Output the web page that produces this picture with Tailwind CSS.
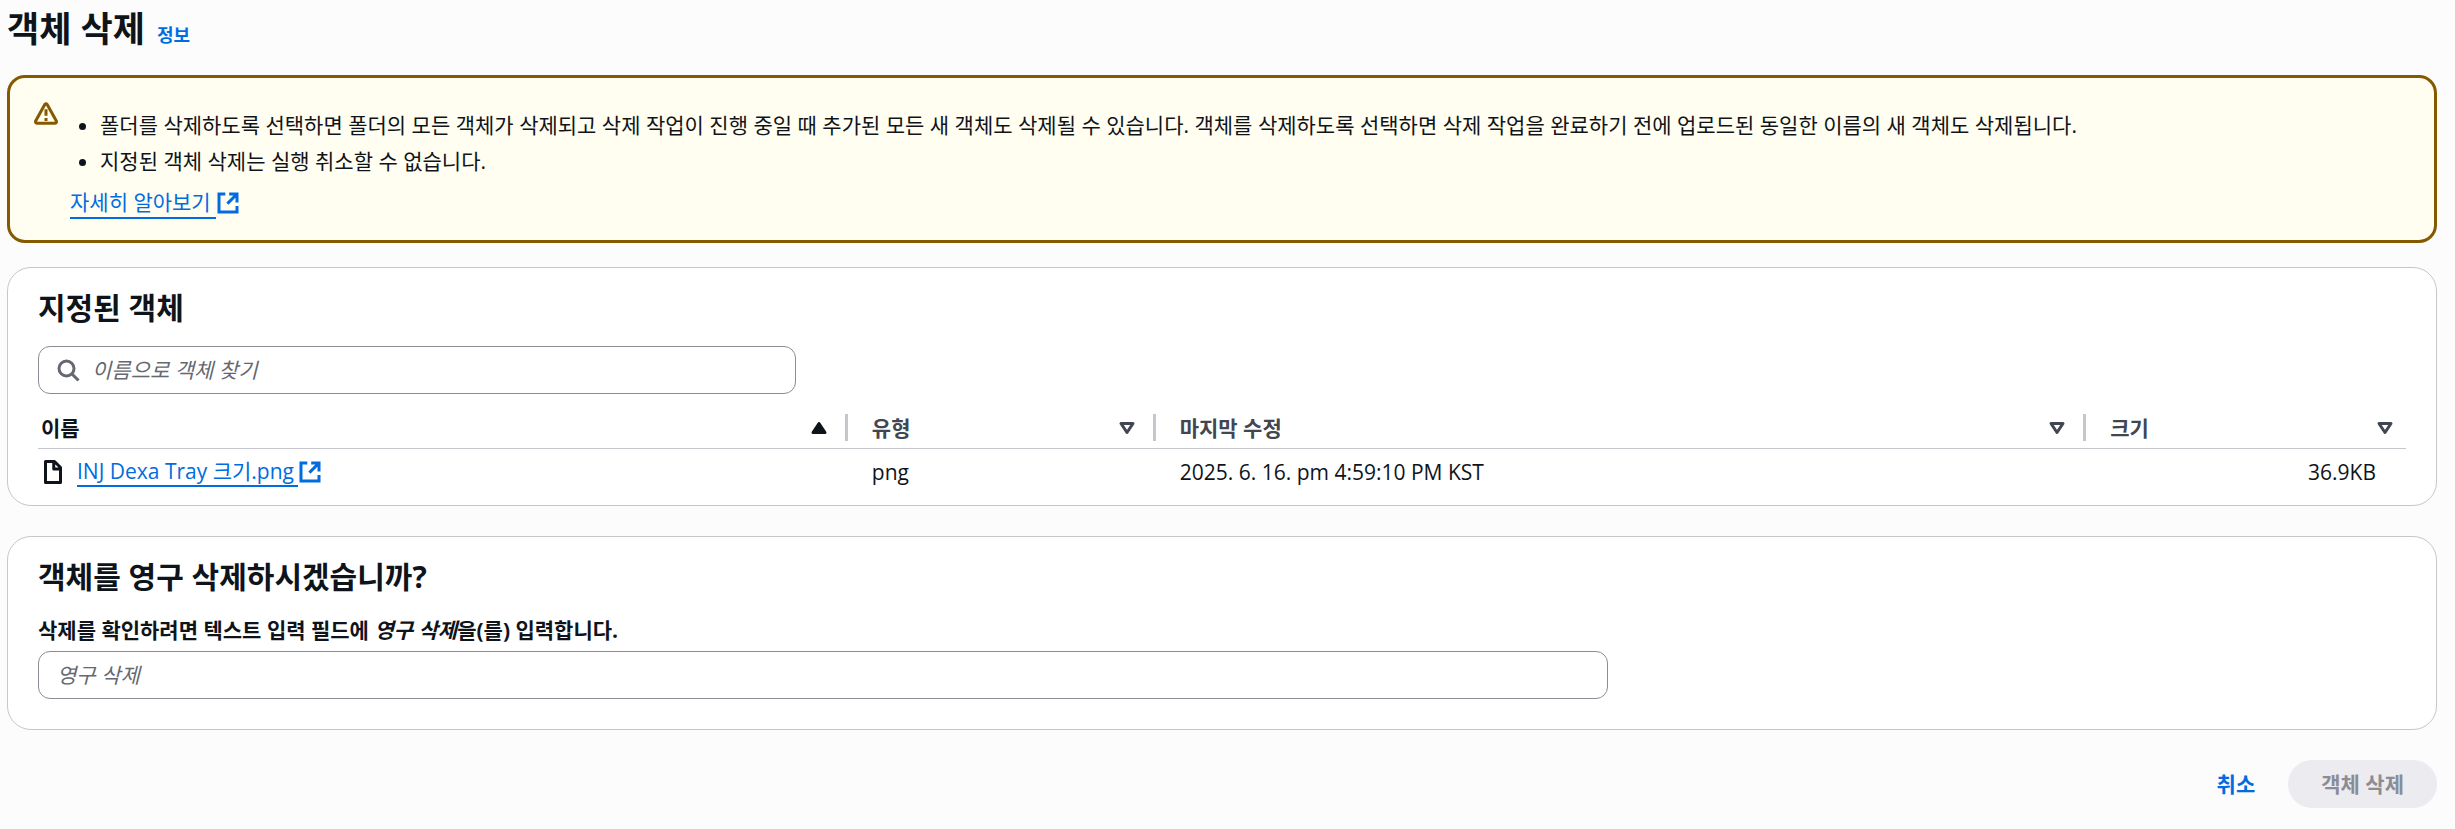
<!DOCTYPE html>
<html lang="ko">
<head>
    <meta charset="UTF-8">
    <meta name="viewport" content="width=device-width, initial-scale=1.0">
    <title>객체 삭제</title>
    <script src="https://cdn.jsdelivr.net/npm/@tailwindcss/browser@4"></script>
</head>
<body class="bg-[#fcfcfd] text-[#0f141a] text-[21px] leading-[30px] font-['Open_Sans','Noto_Sans_CJK_KR',sans-serif]">
    <!-- Shared icons -->
    <svg class="hidden">
        <symbol id="external" viewBox="0 0 16 16" fill="none" stroke="currentColor" stroke-width="2">
            <path d="M8.8 2H14v5.6M7.6 8.4L14 2M14 10v4H2V2h4.2" />
        </symbol>
        <symbol id="sort" viewBox="0 0 16 16" fill="none" stroke="currentColor" stroke-width="2" stroke-linejoin="round">
            <path d="M4 5h8l-4 6z" />
        </symbol>
    </svg>

    <main class="pl-[7px] pr-[18px] pb-5">
        <header class="flex items-baseline gap-3 pt-[6px] pb-6">
            <h1 class="text-[35px] leading-[45px] font-bold">객체 삭제</h1>
            <a href="#" class="text-[18px] font-bold text-[#006ce0]">정보</a>
        </header>

        <!-- Warning -->
        <section class="flex gap-3 rounded-[18px] border-3 border-[#855900] bg-[#fffef0] px-6 pt-6 pb-[21px] mb-6">
            <svg class="w-6 h-6 shrink-0 text-[#855900]" viewBox="0 0 16 16" fill="none" stroke="currentColor" stroke-width="2" stroke-linejoin="round">
                <path d="M7.2 1.6Q8 .6 8.8 1.6L14.9 12.6Q15.3 14 14 14.2H2Q.7 14 1.1 12.6zM8 4.8v4.4M8 10.7v2" />
            </svg>
            <div class="pt-[5px]">
                <ul class="list-disc pl-[30px] leading-9">
                    <li>폴더를 삭제하도록 선택하면 폴더의 모든 객체가 삭제되고 삭제 작업이 진행 중일 때 추가된 모든 새 객체도 삭제될 수 있습니다. 객체를 삭제하도록 선택하면 삭제 작업을 완료하기 전에 업로드된 동일한 이름의 새 객체도 삭제됩니다.</li>
                    <li>지정된 객체 삭제는 실행 취소할 수 없습니다.</li>
                </ul>
                <a href="#" class="flex w-fit items-center mt-2 text-[#006ce0]">
                    <span class="border-b-2 pr-[5px]">자세히 알아보기</span>
                    <svg class="w-6 h-6"><use href="#external" /></svg>
                </a>
            </div>
        </section>

        <!-- Specified objects -->
        <section class="rounded-3xl border border-[#c6c6cd] bg-white px-[30px] pt-[22px] pb-[18px] mb-[30px]">
            <h2 class="text-[30px] leading-9 font-bold mb-5">지정된 객체</h2>
            <label class="flex items-center gap-3 w-[32%] h-12 rounded-xl border border-[#8c8c94] px-[17px]">
                <svg class="w-6 h-6 shrink-0 text-[#656871]" viewBox="0 0 16 16" fill="none" stroke="currentColor" stroke-width="2">
                    <circle cx="7" cy="7" r="5" />
                    <path d="M15 15l-4.5-4.5" />
                </svg>
                <input type="search" aria-label="이름으로 객체 찾기" placeholder="이름으로 객체 찾기" class="w-full outline-none placeholder:italic placeholder:text-[#656871]">
            </label>
            <table class="w-full table-fixed mt-2">
                <thead class="text-left text-[#424650]">
                    <tr class="border-b border-[#c6c6cd]">
                        <th class="w-[34.2%] pt-3 pb-[7px] pl-[3px] text-[#0f141a]">
                            <div class="flex items-center justify-between h-[27px] pr-[14px] border-r-3 border-[#c6c6cd]">이름
                                <svg class="w-6 h-6 rotate-180" viewBox="0 0 16 16" fill="currentColor" stroke="currentColor" stroke-width="2" stroke-linejoin="round"><path d="M4 5h8l-4 6z" /></svg>
                            </div>
                        </th>
                        <th class="w-[13%] pt-3 pb-[7px] pl-6">
                            <div class="flex items-center justify-between h-[27px] pr-[14px] border-r-3 border-[#c6c6cd]">유형
                                <svg class="w-6 h-6"><use href="#sort" /></svg>
                            </div>
                        </th>
                        <th class="w-[39.3%] pt-3 pb-[7px] pl-6">
                            <div class="flex items-center justify-between h-[27px] pr-[14px] border-r-3 border-[#c6c6cd]">마지막 수정
                                <svg class="w-6 h-6"><use href="#sort" /></svg>
                            </div>
                        </th>
                        <th class="pt-3 pb-[7px] pl-6">
                            <div class="flex items-center justify-between h-[27px] pr-[9px]">크기
                                <svg class="w-6 h-6"><use href="#sort" /></svg>
                            </div>
                        </th>
                    </tr>
                </thead>
                <tbody>
                    <tr>
                        <td class="pl-[3px] pt-2">
                            <div class="flex items-center gap-3">
                                <svg class="w-6 h-6" viewBox="0 0 16 16" fill="none" stroke="currentColor" stroke-width="2" stroke-linejoin="round">
                                    <path d="M3 1h6l4 4v10H3zM8.5 1v5H13" />
                                </svg>
                                <a href="#" class="flex items-center text-[#006ce0]">
                                    <span class="border-b-2 pr-1 leading-7">INJ Dexa Tray 크기.png</span>
                                    <svg class="w-6 h-6"><use href="#external" /></svg>
                                </a>
                            </div>
                        </td>
                        <td class="pl-6 pt-2">png</td>
                        <td class="pl-6 pt-2">2025. 6. 16. pm 4:59:10 PM KST</td>
                        <td class="pr-[30px] pt-2 text-right">36.9KB</td>
                    </tr>
                </tbody>
            </table>
        </section>

        <!-- Confirmation -->
        <section class="rounded-3xl border border-[#c6c6cd] bg-white px-[30px] pt-[22px] pb-[30px]">
            <h2 class="text-[30px] leading-9 font-bold mb-5">객체를 영구 삭제하시겠습니까?</h2>
            <label for="confirm" class="block font-bold mb-[6px]">삭제를 확인하려면 텍스트 입력 필드에 <i>영구 삭제</i>을(를) 입력합니다.</label>
            <input id="confirm" type="text" placeholder="영구 삭제" class="block w-[66.3%] h-12 rounded-xl border border-[#8c8c94] px-[18px] outline-none placeholder:italic placeholder:text-[#656871]">
        </section>

        <div class="flex justify-end mt-[30px]">
            <button type="button" class="h-12 px-[33px] font-bold text-[#006ce0]">취소</button>
            <button type="button" disabled class="h-12 px-[33px] rounded-full bg-[#ebebf0] font-bold text-[#8c8c94]">객체 삭제</button>
        </div>
    </main>
</body>
</html>
